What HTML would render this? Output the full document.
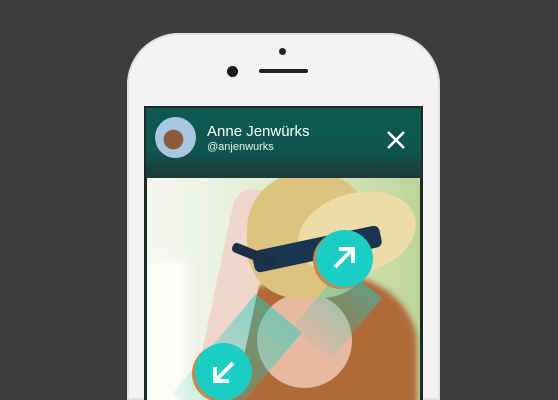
<!DOCTYPE html>
<html style="height:400px;overflow:hidden"><head><style>
body{margin:0;width:558px;height:400px;background:#3d3d3d;overflow:hidden;font-family:"Liberation Sans",sans-serif}
#w{position:relative;width:558px;height:400px;overflow:hidden}
.phone{position:absolute;left:127px;top:33px;width:313px;height:367px;background:#f3f3f3;border-radius:52px 52px 0 0;box-shadow:inset 0 0 0 2px #e2e2e2}
.screen{position:absolute;left:144px;top:106px;width:279px;height:294px;background:#1c2a28}
.hdr{position:absolute;left:146px;top:108px;width:275px;height:70px;background:linear-gradient(#0e5b53 0%,#0f554e 60%,#1d3a38 100%)}
.photo{position:absolute;left:147px;top:178px;width:273px;height:222px;overflow:hidden;background:linear-gradient(90deg,#f4f7f0 0%,#eef3e6 20%,#d9e6c2 60%,#c9dca8 85%,#bcd49a 100%)}
.av{position:absolute;left:155px;top:117px;width:41px;height:41px;border-radius:50%;background:radial-gradient(circle at 45% 55%,#8a5a3a 0 30%,#a9c7e3 32%)}
.n{position:absolute;left:207px;top:123px;color:#fff;font-size:15px}
.h{position:absolute;left:207px;top:141px;color:#e8f2f0;font-size:11px}
.c{position:absolute;border-radius:50%;background:#1ccdc3;box-shadow:-3px 2px 0 #c7874e}
</style></head><body><div id="w">
<div class="phone"></div>
<div style="position:absolute;left:279px;top:48px;width:7px;height:7px;border-radius:50%;background:#222"></div>
<div style="position:absolute;left:227px;top:66px;width:11px;height:11px;border-radius:50%;background:#1a1a1a"></div>
<div style="position:absolute;left:259px;top:69px;width:49px;height:4px;border-radius:2px;background:#222"></div>
<div class="screen"></div>
<div class="hdr"></div>
<div class="av"></div>
<div class="n">Anne Jenwürks</div>
<div class="h">@anjenwurks</div>
<svg style="position:absolute;left:386px;top:130px" width="20" height="20"><path d="M2 2L18 18M18 2L2 18" stroke="#fff" stroke-width="2.6"/></svg>
<div class="photo">
 <div style="position:absolute;left:0;top:80px;width:40px;height:150px;background:#fbfbf8;filter:blur(6px)"></div>
 <div style="position:absolute;left:75px;top:95px;width:195px;height:160px;border-radius:45% 45% 0 0;background:#b06a3a;filter:blur(3px)"></div>
 <div style="position:absolute;left:110px;top:115px;width:95px;height:95px;border-radius:50%;background:#e6b9a0"></div>
 <div style="position:absolute;left:70px;top:10px;width:42px;height:190px;background:#f0d6c8;border-radius:20px;transform:rotate(12deg)"></div>
 <div style="position:absolute;left:100px;top:-5px;width:125px;height:125px;border-radius:45% 45% 40% 40%;background:#dcc47e"></div>
 <div style="position:absolute;left:150px;top:15px;width:120px;height:80px;border-radius:50%;background:#ecdca8;transform:rotate(-15deg)"></div>
 <div style="position:absolute;left:105px;top:60px;width:130px;height:22px;background:#1b3550;transform:rotate(-12deg);border-radius:6px"></div>
 <div style="position:absolute;left:84px;top:72px;width:46px;height:10px;background:#1b2f45;transform:rotate(22deg);border-radius:4px"></div>
 <div style="position:absolute;left:60px;top:120px;width:60px;height:130px;background:linear-gradient(rgba(28,205,195,.5),rgba(28,205,195,.1));transform:rotate(40deg)"></div>
 <div style="position:absolute;left:165px;top:95px;width:50px;height:80px;background:linear-gradient(rgba(28,205,195,.5),rgba(28,205,195,.05));transform:rotate(40deg)"></div>
</div>
<div class="c" style="left:316px;top:230px;width:57px;height:57px"></div>
<svg style="position:absolute;left:330px;top:244px" width="28" height="28"><path d="M5 23L23 5M9 5H23V19" stroke="#fff" stroke-width="4" fill="none"/></svg>
<div class="c" style="left:195px;top:343px;width:57px;height:57px"></div>
<svg style="position:absolute;left:210px;top:358px" width="28" height="28"><path d="M23 5L5 23M5 9V23H19" stroke="#fff" stroke-width="4" fill="none"/></svg>
</div></body></html>
